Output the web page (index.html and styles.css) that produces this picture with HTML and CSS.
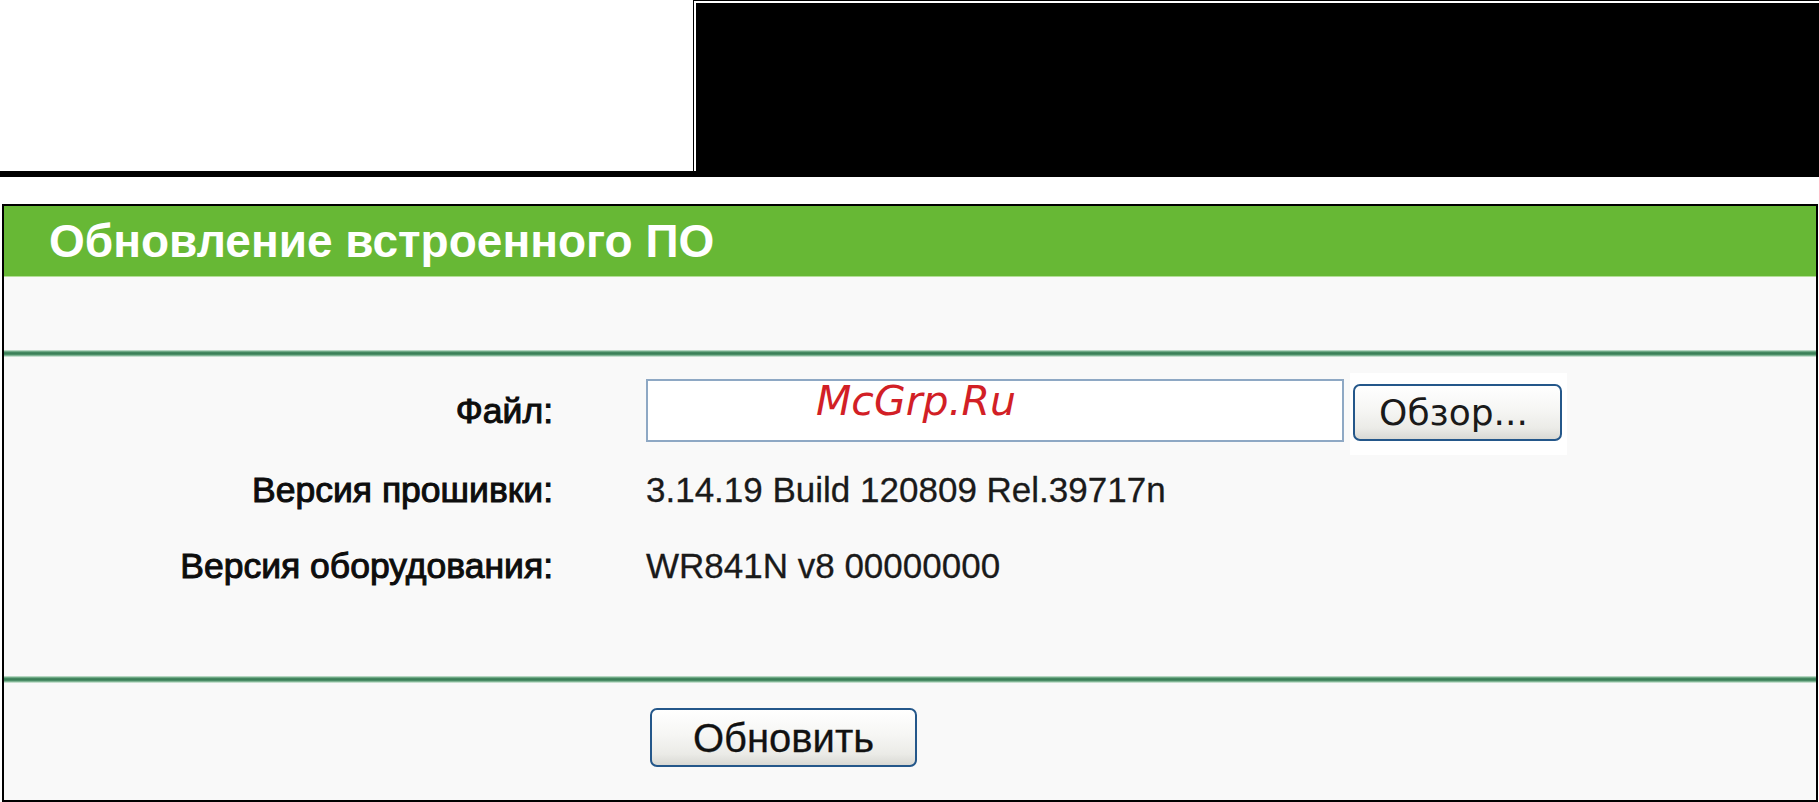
FILE: index.html
```html
<!DOCTYPE html>
<html lang="ru">
<head>
<meta charset="utf-8">
<title>Обновление встроенного ПО</title>
<link rel="stylesheet" href="styles.css">
</head>
<body>
<div class="top">
  <div class="top-left"></div>
  <div class="top-right"><div class="top-fill"></div></div>
</div>
<div class="top-bar"></div>

<div class="panel">
  <div class="head"><h1 class="title">Обновление встроенного ПО</h1></div>
  <div class="spacer"></div>
  <div class="sep"></div>
  <div class="form">
    <div class="row row-file">
      <div class="lbl">Файл:</div>
      <div class="val file-box">
        <span class="input"></span>
        <span class="btn-wrap"><button class="btn browse" type="button">Обзор...</button></span>
        <span class="wm">McGrp.Ru</span>
      </div>
    </div>
    <div class="row row-fw">
      <div class="lbl">Версия прошивки:</div>
      <div class="val">3.14.19 Build 120809 Rel.39717n</div>
    </div>
    <div class="row row-hw">
      <div class="lbl">Версия оборудования:</div>
      <div class="val">WR841N v8 00000000</div>
    </div>
  </div>
  <div class="sep"></div>
  <div class="actions">
    <div class="lbl"></div>
    <div class="val"><button class="btn upgrade" type="button">Обновить</button></div>
  </div>
</div>
</body>
</html>
```

FILE: styles.css
```css
html, body {
  margin: 0;
  padding: 0;
  background: #ffffff;
}
body {
  width: 1819px;
  height: 802px;
  overflow: hidden;
  font-family: "Liberation Sans", Arial, sans-serif;
}

/* top black block */
.top {
  display: flex;
  height: 171px;
}
.top-left {
  width: 693px;
  background: #ffffff;
}
.top-right {
  flex: 1;
  border-left: 1px solid #000;
  border-top: 1px solid #000;
  padding: 2px 0 0 2px;
  background: #ffffff;
  display: flex;
}
.top-fill {
  flex: 1;
  background: #000;
}
.top-bar {
  height: 6px;
  background: #000;
}

/* panel */
.panel {
  margin: 27px 0 0 2px;
  width: 1812px;
  border: 2px solid #000;
  background: #f9f9f9;
}
.head {
  height: 70px;
  background: #67b835;
  border-bottom: 1px solid #b4df98;
  padding-left: 45px;
}
.title {
  margin: 0;
  font-size: 46px;
  line-height: 70px;
  font-weight: bold;
  color: #ffffff;
}
.spacer {
  height: 73px;
}
.sep {
  height: 7px;
  background: linear-gradient(to bottom,
    #d9ebdf 0px, #93c2a4 1px, #4e9169 2px, #3b7f58 3px,
    #3d8159 4px, #5a9b75 5px, #a5cdb3 6px, #e6f2ea 7px);
}

.form {
  padding: 22px 0 90px 0;
}
.row {
  display: grid;
  grid-template-columns: 549px 1fr;
  column-gap: 93px;
  align-items: center;
}
.row-fw { margin-top: 28px; }
.row-hw { margin-top: 36px; }

.lbl {
  text-align: right;
  font-size: 35.5px;
  line-height: 40px;
  color: #0d0d0d;
  -webkit-text-stroke: 1px #0d0d0d;
}
.val {
  font-size: 35px;
  line-height: 40px;
  color: #1a1a1a;
  -webkit-text-stroke: 0.3px #1a1a1a;
}

.file-box {
  position: relative;
  display: flex;
  align-items: flex-start;
  height: 63px;
  -webkit-text-stroke: 0;
}
.input {
  display: block;
  width: 694px;
  height: 59px;
  background: #ffffff;
  border: 2px solid #8ea8c4;
}
.btn-wrap {
  display: block;
  margin: -6px 0 0 6px;
  padding: 11px 5px 14px 3px;
  background: #ffffff;
}
.btn {
  display: block;
  box-sizing: border-box;
  border: 2px solid #24578a;
  border-radius: 7px;
  background: linear-gradient(to bottom, #ffffff 0%, #f6f6f4 45%, #ebebe7 80%, #d9d9d4 100%);
  padding: 0;
  color: #1a1a1a;
  cursor: pointer;
}
.browse {
  width: 209px;
  height: 57px;
  padding-right: 8px;
  font-family: "DejaVu Sans", Verdana, sans-serif;
  font-size: 36px;
  line-height: 50px;
}
.wm {
  position: absolute;
  left: 170px;
  top: 2px;
  font-family: "DejaVu Sans", Verdana, sans-serif;
  font-style: oblique;
  font-size: 41px;
  line-height: 40px;
  color: #d21f26;
}

.actions {
  display: grid;
  grid-template-columns: 549px 1fr;
  column-gap: 93px;
  padding: 25px 0 33px 0;
}
.upgrade {
  margin-left: 4px;
  width: 267px;
  height: 59px;
  font-family: "Liberation Sans", Arial, sans-serif;
  font-size: 40px;
  line-height: 54px;
  color: #111;
}
```
